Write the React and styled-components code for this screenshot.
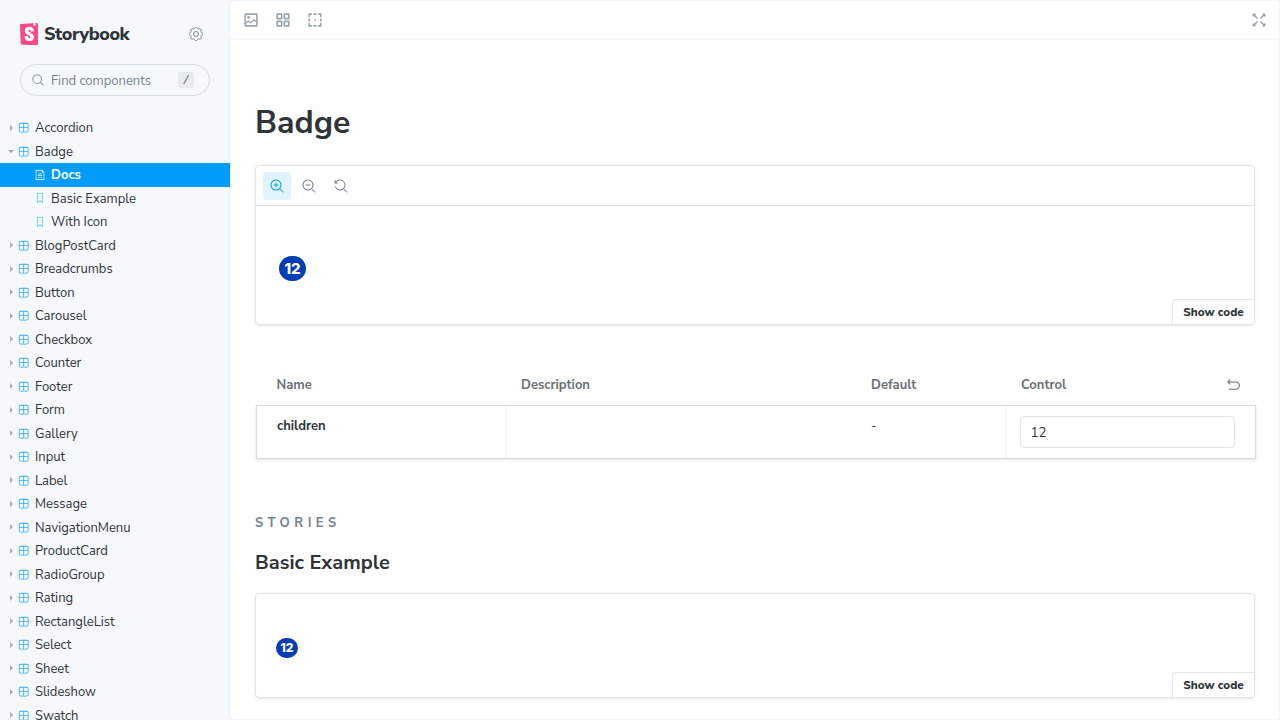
import React from "react";
import styled, { createGlobalStyle, css } from "styled-components";

const GlobalStyle = createGlobalStyle`
  *, *::before, *::after { box-sizing: border-box; }
  body {
    margin: 0;
    overflow: hidden;
    background: #f6f9fc;
    color: #2e3438;
    font-family: "Nunito Sans", Lato, "Liberation Sans", sans-serif;
    font-size: 13px;
    -webkit-font-smoothing: antialiased;
  }
`;

const Shell = styled.div`
  display: flex;
  width: 1280px;
  height: 720px;
  overflow: hidden;
`;

const Sidebar = styled.aside`
  flex: 0 0 230px;
  height: 720px;
  overflow: hidden;
  background: #f6f9fc;
`;

const Brand = styled.div`
  display: flex;
  align-items: center;
  height: 24px;
  margin: 22px 20px 18px;
`;

const BrandName = styled.span`
  flex: 1;
  margin-left: 6px;
  font-size: 18px;
  font-weight: 800;
  line-height: 24px;
  letter-spacing: -0.42px;
`;

const SettingsButton = styled.span`
  display: flex;
  justify-content: center;
  width: 28px;
  color: #73828c;
`;

const SearchField = styled.div`
  display: flex;
  align-items: center;
  height: 32px;
  margin: 0 20px 20px;
  padding: 0 15px 0 11px;
  border: 1px solid #d5dee4;
  border-radius: 16px;
  color: #73828c;
`;

const Placeholder = styled.span`
  flex: 1;
  margin-left: 7px;
  padding-top: 1px;
  line-height: 20px;
`;

const Key = styled.kbd`
  width: 16px;
  height: 16px;
  border-radius: 3px;
  background: #e8ecef;
  color: #5c6870;
  font: 12px/18px "Liberation Mono", monospace;
  text-align: center;
`;

const TreeRow = styled.div`
  display: flex;
  align-items: center;
  height: 23.5px;
  padding-left: ${(p) => (p.$nested ? 35 : 8)}px;
  color: ${(p) => (p.$active ? "#fff" : "#2e3438")};
  background: ${(p) => (p.$active ? "#029cfd" : "transparent")};
  font-weight: ${(p) => (p.$active ? 700 : 400)};
`;

const Arrow = styled.span`
  width: 0;
  height: 0;
  border: 3px solid transparent;
  ${(p) =>
    p.$open
      ? css`
          border-top-color: #9aa5ad;
          margin: 4px 5px 0 0;
        `
      : css`
          border-left-color: #a3adb4;
          margin: 0 3px 0 2px;
        `}
`;

const TreeIcon = styled.span`
  display: flex;
  width: 12px;
  margin: 0 5px 0 -1px;
  padding-left: ${(p) => p.$inset || 0}px;
  color: ${(p) => p.$color};
`;

const TreeLabel = styled.span`
  margin-top: 0.6px;
  line-height: 20px;
`;

const Main = styled.main`
  flex: 1;
  min-width: 0;
  height: 720px;
  padding-left: 1px;
  overflow: hidden;
  background: #fff;
  border: 1px solid #f3f6f8;
  border-left: 0;
  border-radius: 5px;
  box-shadow: 0 0 0 1px rgba(38, 85, 115, 0.06);
`;

const TopBar = styled.header`
  display: flex;
  align-items: center;
  gap: 18px;
  height: 39px;
  margin-left: -1px;
  padding: 0 13px 0 14px;
  border-bottom: 1px solid #f3f6f8;
  box-shadow: 0 -1px 0 #f9fbfc inset;
  color: #9aa6ae;
`;

const Spacer = styled.span`
  flex: 1;
`;

const Article = styled.article`
  width: 1000px;
  margin-left: 24px;
  padding-top: 63px;
`;

const Title = styled.h1`
  height: 40px;
  margin: 0 0 22px;
  font-size: 32px;
  font-weight: 700;
  line-height: 40px;
`;

const Card = styled.section`
  display: flex;
  flex-direction: column;
  height: ${(p) => p.$height}px;
  border: 1px solid #dfe5e8;
  border-radius: 4px;
  box-shadow: 0 1px 3px rgba(0, 0, 0, 0.1);
  overflow: hidden;
`;

const CardTools = styled.div`
  display: flex;
  align-items: center;
  gap: 4px;
  height: 40px;
  padding: 0 7px;
  border-bottom: 1px solid #dfe5e8;
`;

const ToolButton = styled.span`
  display: flex;
  align-items: center;
  justify-content: center;
  width: 28px;
  height: 28px;
  border-radius: 4px;
  background: ${(p) => (p.$active ? "#e0f3ff" : "transparent")};
  color: ${(p) => (p.$active ? "#029cfd" : "#73828c")};
`;

const Preview = styled.div`
  flex: 1;
  padding: ${(p) => p.$pad};
`;

const CountBadge = styled.span`
  display: flex;
  align-items: center;
  justify-content: center;
  width: ${(p) => (p.$large ? 27 : 22)}px;
  height: ${(p) => (p.$large ? 25 : 20)}px;
  border-radius: 13px;
  background: #063fb3;
  color: #fff;
  font-family: Inter, "Liberation Sans", sans-serif;
  font-size: ${(p) => (p.$large ? 15 : 12)}px;
  font-weight: 800;
  line-height: 1;
`;

const ShowCode = styled.span`
  align-self: flex-end;
  width: 82px;
  height: 25px;
  border-top: 1px solid #dfe5e8;
  border-left: 1px solid #dfe5e8;
  border-radius: 4px 0 0 0;
  font-size: 11.7px;
  font-weight: 800;
  line-height: 24px;
  text-align: center;
`;

const TableHead = styled.div`
  display: grid;
  grid-template-columns: 250px 350px 150px 250px;
  height: 40px;
  margin-top: 40px;
  line-height: 40px;
  color: #6a7074;
  font-weight: 700;
`;

const HeadCell = styled.span`
  display: flex;
  align-items: center;
  justify-content: space-between;
  padding: 0 15px 0 ${(p) => (p.$first ? 21.5 : 16)}px;
`;

const TableRow = styled.div`
  display: grid;
  grid-template-columns: 250px 350px 149px 249px;
  width: 1000px;
  height: 54px;
  margin-left: 1px;
  border: 1px solid #d5dde0;
  box-shadow: 0 1px 3px rgba(0, 0, 0, 0.1);
`;

const Cell = styled.span`
  padding: 10px 15px 0 ${(p) => (p.$first ? 20 : 14)}px;
  border-left: ${(p) => (p.$divided ? "1px solid #f1f4f5" : "0")};
  font-weight: ${(p) => (p.$first ? 700 : 400)};
  line-height: 20px;
  margin-left: ${(p) => (p.$divided ? -1 : 0)}px;
`;

const TextBox = styled.span`
  display: block;
  width: 215px;
  height: 32px;
  padding: 1px 9.5px 0;
  border: 1px solid #dde5e9;
  border-radius: 4px;
  font-size: 13.3px;
  line-height: 31px;
`;

const Overline = styled.h2`
  height: 20px;
  margin: 54px 0 0;
  color: #73828c;
  font-size: 13px;
  font-weight: 700;
  line-height: 20px;
  letter-spacing: 4.5px;
`;

const StoryTitle = styled.h3`
  height: 28px;
  margin: 16px 0 16px;
  font-size: 20px;
  font-weight: 700;
  line-height: 28px;
`;

const Svg = styled.svg`
  display: block;
  flex: none;
  width: ${(p) => p.$size || 14}px;
  height: ${(p) => p.$size || 14}px;
`;

const lens =
  "M9.544 10.206a5.5 5.5 0 11.662-.662.5.5 0 01.148.102l3 3a.5.5 0 01-.708.708l-3-3a.5.5 0 01-.102-.148zM10.5 6a4.5 4.5 0 11-9 0 4.5 4.5 0 019 0z";

const shapes = {
  search: [lens],
  zoomIn: [
    "M6 3.5a.5.5 0 01.5.5v1.5H8a.5.5 0 010 1H6.5V8a.5.5 0 01-1 0V6.5H4a.5.5 0 010-1h1.5V4a.5.5 0 01.5-.5z",
    lens,
  ],
  zoomOut: ["M4 5.5a.5.5 0 000 1h4a.5.5 0 000-1H4z", lens],
  zoomReset: [
    "M1.5 2.837V1.5a.5.5 0 00-1 0V4a.5.5 0 00.5.5h2.5a.5.5 0 000-1H2.258a4.5 4.5 0 11-.496 4.016.5.5 0 10-.942.337 5.502 5.502 0 008.724 2.353.5.5 0 00.102.148l3 3a.5.5 0 00.708-.708l-3-3a.5.5 0 00-.148-.102A5.5 5.5 0 101.5 2.837z",
  ],
  component: [
    "M3.5 1.004a2.5 2.5 0 00-2.5 2.5v7a2.5 2.5 0 002.5 2.5h7a2.5 2.5 0 002.5-2.5v-7a2.5 2.5 0 00-2.5-2.5h-7zm8.5 5.5H7.5v-4.5h3a1.5 1.5 0 011.5 1.5v3zm0 1v3a1.5 1.5 0 01-1.5 1.5h-3v-4.5H12zm-5.5 4.5v-4.5H2v3a1.5 1.5 0 001.5 1.5h3zM2 6.504h4.5v-4.5h-3a1.5 1.5 0 00-1.5 1.5v3z",
  ],
  bookmark: [
    "M3.5 0h7a.5.5 0 01.5.5v13a.5.5 0 01-.454.498.462.462 0 01-.371-.118L7 11.159l-3.175 2.72a.46.46 0 01-.379.118A.5.5 0 013 13.5V.5a.5.5 0 01.5-.5zM4 12.413l2.664-2.284a.454.454 0 01.377-.128.498.498 0 01.284.12L10 12.412V1H4v11.413z",
  ],
  doc: [
    "M4 5.5a.5.5 0 01.5-.5h5a.5.5 0 010 1h-5a.5.5 0 01-.5-.5zM4.5 7.5a.5.5 0 000 1h5a.5.5 0 000-1h-5zM4 10.5a.5.5 0 01.5-.5h5a.5.5 0 010 1h-5a.5.5 0 01-.5-.5z",
    "M1.5 0a.5.5 0 00-.5.5v13a.5.5 0 00.5.5h11a.5.5 0 00.5-.5V3.207a.5.5 0 00-.146-.353L10.146.146A.5.5 0 009.793 0H1.5zM2 1h7.5v2a.5.5 0 00.5.5h2V13H2V1z",
  ],
};

function Icon({ name, size }) {
  return (
    <Svg $size={size} viewBox="0 0 14 14" fill="currentColor">
      {shapes[name].map((d) => (
        <path key={d} d={d} fillRule="evenodd" clipRule="evenodd" />
      ))}
    </Svg>
  );
}

function StrokeIcon({ size, width = 1, children }) {
  return (
    <Svg
      $size={size}
      viewBox="0 0 14 14"
      fill="none"
      stroke="currentColor"
      strokeWidth={width}
      strokeLinecap="round"
      strokeLinejoin="round"
    >
      {children}
    </Svg>
  );
}

const gearPath =
  Array.from({ length: 96 }, (_, i) => {
    const a = (i / 96) * Math.PI * 2;
    const r = 6.15 + 0.65 * Math.tanh(2 * Math.cos(8 * a));
    return `${i ? "L" : "M"}${(7 + r * Math.cos(a)).toFixed(2)} ${(7 + r * Math.sin(a)).toFixed(2)}`;
  }).join("") + "Z";

function Logo() {
  return (
    <svg width="18" height="22.4" viewBox="0 0 256 319">
      <path
        fill="#ff4785"
        d="M9.872 293.324L.012 30.574C-.315 21.895 6.338 14.54 15.005 14L238.494.032c8.822-.552 16.42 6.153 16.972 14.975.02.332.031.665.031.998v286.314c0 8.839-7.165 16.004-16.004 16.004-.24 0-.48-.005-.718-.016L25.145 308.71c-8.286-.373-14.958-6.962-15.273-15.385z"
      />
      <path
        fill="#fff"
        d="M188.665 39.127l1.527-36.716L220.884 0l1.323 37.863c.046 1.318-.986 2.424-2.304 2.47-.564.02-1.118-.16-1.561-.506l-11.835-9.325-14.012 10.63c-1.05.797-2.548.591-3.345-.459-.348-.456-.525-1.015-.485-1.546zM149.413 119.98c0 6.227 41.947 3.243 47.577-1.131 0-42.402-22.752-64.684-64.415-64.684-41.662 0-65.005 22.628-65.005 56.57 0 59.116 79.78 60.249 79.78 92.495 0 9.051-4.433 14.426-14.184 14.426-12.706 0-17.729-6.49-17.138-28.552 0-4.786-48.458-6.278-49.936 0-3.762 53.466 29.548 68.887 67.665 68.887 36.935 0 65.892-19.687 65.892-55.326 0-63.36-80.961-61.663-80.961-93.06 0-12.729 9.455-14.426 15.07-14.426 5.909 0 16.545 1.042 15.655 24.801z"
      />
    </svg>
  );
}

const tree = [
  { label: "Accordion" },
  { label: "Badge", open: true },
  { label: "Docs", kind: "doc", active: true },
  { label: "Basic Example", kind: "bookmark" },
  { label: "With Icon", kind: "bookmark" },
  { label: "BlogPostCard" },
  { label: "Breadcrumbs" },
  { label: "Button" },
  { label: "Carousel" },
  { label: "Checkbox" },
  { label: "Counter" },
  { label: "Footer" },
  { label: "Form" },
  { label: "Gallery" },
  { label: "Input" },
  { label: "Label" },
  { label: "Message" },
  { label: "NavigationMenu" },
  { label: "ProductCard" },
  { label: "RadioGroup" },
  { label: "Rating" },
  { label: "RectangleList" },
  { label: "Select" },
  { label: "Sheet" },
  { label: "Slideshow" },
  { label: "Swatch" },
];

const kinds = {
  component: { color: "#2babfd", size: 11.4, inset: 0 },
  doc: { color: "#fff", size: 10, inset: 1 },
  bookmark: { color: "#37d5d3", size: 10, inset: 1 },
};

function TreeItem({ label, kind = "component", active, open }) {
  const { color, size, inset } = kinds[kind];
  const nested = kind !== "component";
  return (
    <TreeRow $nested={nested} $active={active}>
      {!nested && <Arrow $open={open} />}
      <TreeIcon $color={color} $inset={inset}>
        <Icon name={kind} size={size} />
      </TreeIcon>
      <TreeLabel>{label}</TreeLabel>
    </TreeRow>
  );
}

export default function App() {
  return (
    <>
      <GlobalStyle />
      <Shell>
        <Sidebar>
          <Brand>
            <Logo />
            <BrandName>Storybook</BrandName>
            <SettingsButton>
              <StrokeIcon size={14} width={1}>
                <path d={gearPath} />
                <circle cx="7" cy="7" r="2.5" />
              </StrokeIcon>
            </SettingsButton>
          </Brand>
          <SearchField>
            <Icon name="search" size={12} />
            <Placeholder>Find components</Placeholder>
            <Key>/</Key>
          </SearchField>
          {tree.map((item) => (
            <TreeItem key={item.label} {...item} />
          ))}
        </Sidebar>
        <Main>
          <TopBar>
            <StrokeIcon width={1.6}>
              <rect x="1.1" y="1.1" width="11.8" height="11.8" rx="0.6" />
              <path strokeWidth="1.3" d="M1.3 10.6 4.4 7.9 6.7 9.8 10 6.8 12.8 9.3" />
              <circle strokeWidth="1.2" cx="4.6" cy="4.5" r="0.8" />
            </StrokeIcon>
            <StrokeIcon width={1.7}>
              <rect x="1.1" y="1.1" width="4.6" height="4.6" rx="0.5" />
              <rect x="8.3" y="1.1" width="4.6" height="4.6" rx="0.5" />
              <rect x="1.1" y="8.3" width="4.6" height="4.6" rx="0.5" />
              <rect x="8.3" y="8.3" width="4.6" height="4.6" rx="0.5" />
            </StrokeIcon>
            <StrokeIcon width={1.6}>
              <path d="M1.1 3.4V1.1h2.3M6 1.1h2M10.6 1.1h2.3v2.3M12.9 6v2M12.9 10.6v2.3h-2.3M8 12.9H6M3.4 12.9H1.1v-2.3M1.1 8V6" />
              <circle cx="7" cy="7" r="0.3" />
            </StrokeIcon>
            <Spacer />
            <StrokeIcon width={1.6}>
              <path d="M1.3 3v-1.7H3M1.3 1.3l3.9 3.9M11 1.3h1.7V3M12.7 1.3 8.8 5.2M12.7 11v1.7H11M12.7 12.7 8.8 8.8M3 12.7H1.3V11M1.3 12.7l3.9-3.9" />
            </StrokeIcon>
          </TopBar>
          <Article>
            <Title>Badge</Title>
            <Card $height={160}>
              <CardTools>
                <ToolButton $active>
                  <Icon name="zoomIn" />
                </ToolButton>
                <ToolButton>
                  <Icon name="zoomOut" />
                </ToolButton>
                <ToolButton>
                  <Icon name="zoomReset" />
                </ToolButton>
              </CardTools>
              <Preview $pad="50px 23px 0">
                <CountBadge $large>12</CountBadge>
              </Preview>
              <ShowCode>Show code</ShowCode>
            </Card>
            <TableHead>
              <HeadCell $first>Name</HeadCell>
              <HeadCell>Description</HeadCell>
              <HeadCell>Default</HeadCell>
              <HeadCell>
                Control
                <StrokeIcon size={13} width={1.1}>
                  <path d="M3.2 1 .9 3.2l2.3 2.2M1.2 3.2h8.3a3.9 3.9 0 010 7.8H2.5" />
                </StrokeIcon>
              </HeadCell>
            </TableHead>
            <TableRow>
              <Cell $first>children</Cell>
              <Cell $divided />
              <Cell>-</Cell>
              <Cell $divided>
                <TextBox>12</TextBox>
              </Cell>
            </TableRow>
            <Overline>STORIES</Overline>
            <StoryTitle>Basic Example</StoryTitle>
            <Card $height={105}>
              <Preview $pad="44px 20px 0">
                <CountBadge>12</CountBadge>
              </Preview>
              <ShowCode>Show code</ShowCode>
            </Card>
          </Article>
        </Main>
      </Shell>
    </>
  );
}
